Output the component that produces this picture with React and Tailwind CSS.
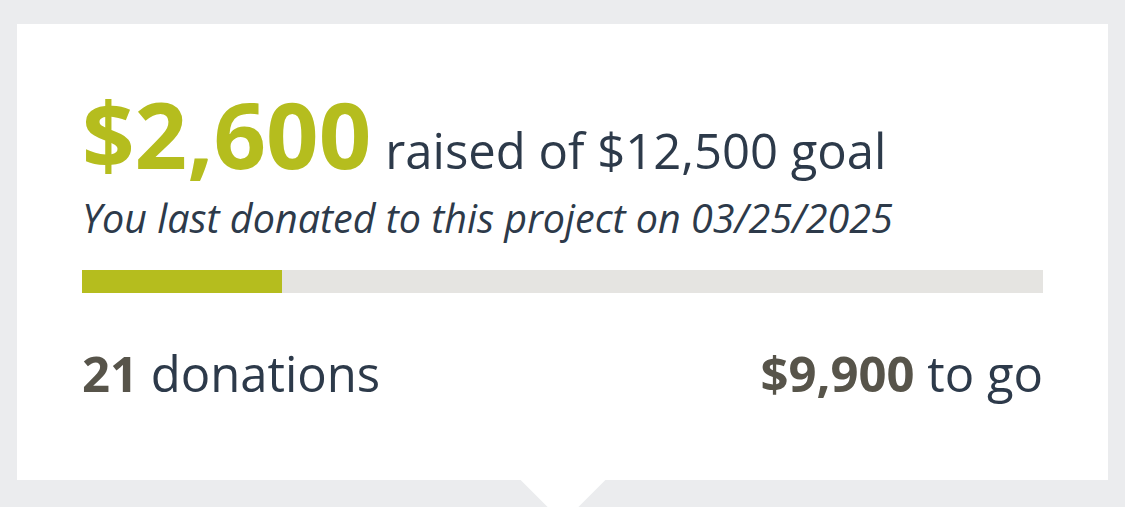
export default function App() {
  const raised = 2600
  const goal = 12500
  const pct = (raised / goal) * 100

  return (
    <div className="h-[507px] w-[1125px] overflow-hidden bg-[#ebecee] pt-[24px] pl-[17px] font-['Open_Sans',sans-serif]">
      <div className="relative w-[1091px]">
        <div className="h-[456px] bg-white px-[65px] pt-[64px]">
          <div className="flex items-baseline gap-[14px] leading-none">
            <span className="text-[92px] font-bold text-[#b5bd1e]">$2,600</span>
            <span className="text-[49px] text-[#2d3a4a]">raised of $12,500 goal</span>
          </div>
          <p className="mt-[19px] text-[39.5px] italic leading-none text-[#2d3a4a]">
            You last donated to this project on 03/25/2025
          </p>
          <div className="mt-[31px] h-[23px] w-full bg-[#e5e4e1]">
            <div className="h-full bg-[#b5bd1e]" style={{ width: `${pct}%` }} />
          </div>
          <div className="mt-[56px] flex items-baseline justify-between text-[49px] leading-none text-[#2d3a4a]">
            <div>
              <span className="font-bold text-[#57544a]">21</span> donations
            </div>
            <div>
              <span className="font-bold text-[#57544a]">$9,900</span> to go
            </div>
          </div>
        </div>
        <div className="absolute left-[516px] top-[426px] h-[60px] w-[60px] rotate-45 bg-white" />
      </div>
    </div>
  )
}
